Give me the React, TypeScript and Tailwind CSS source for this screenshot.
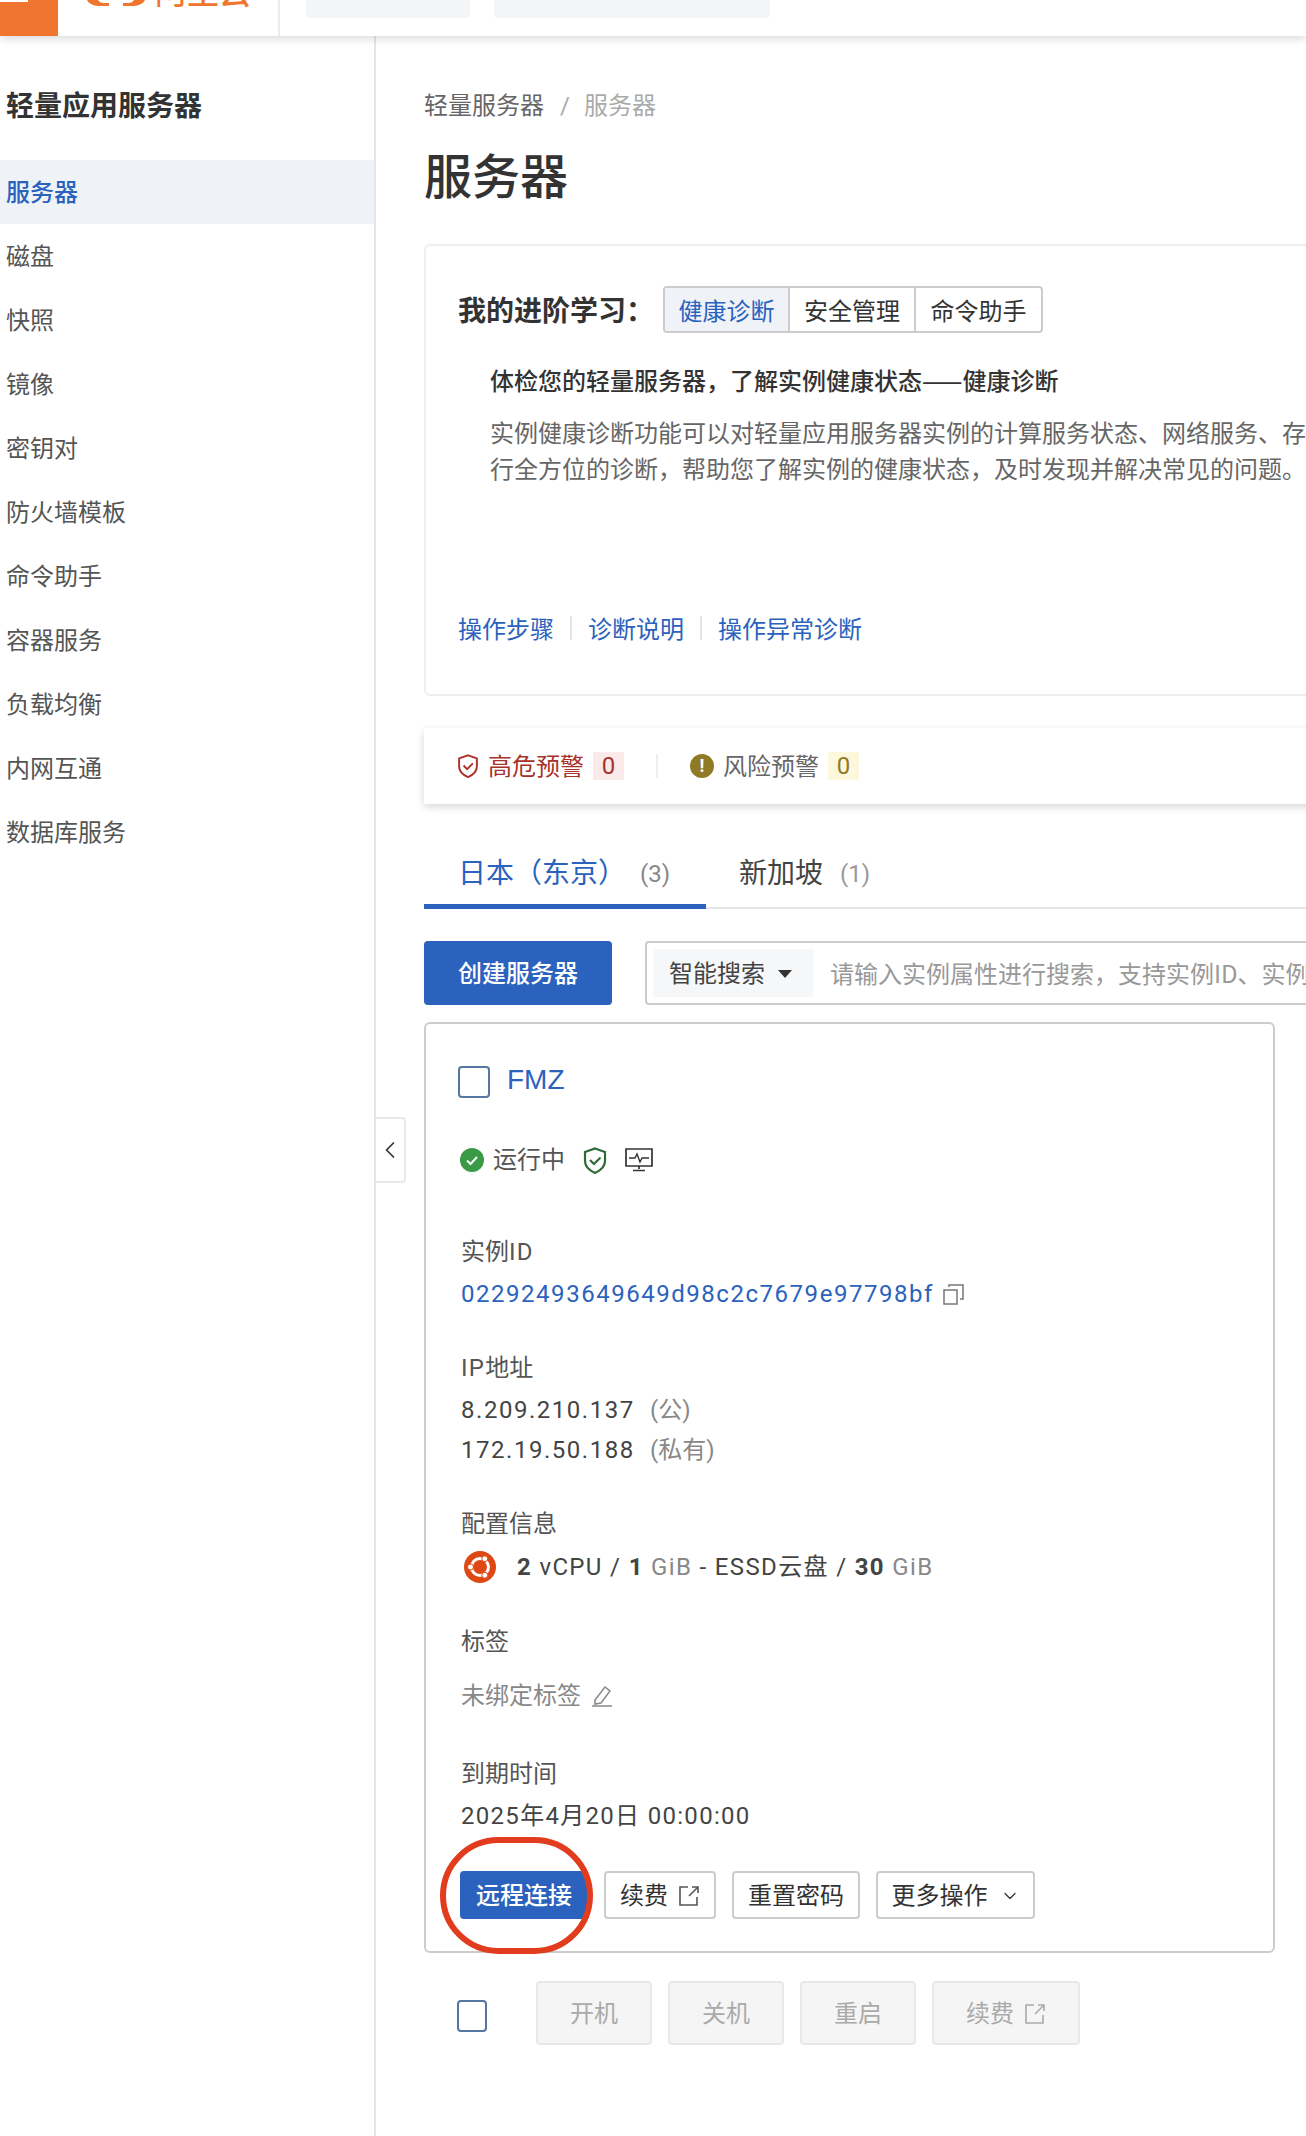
import { ChevronLeft, ChevronDown } from "lucide-react";

const navItems = ["服务器", "磁盘", "快照", "镜像", "密钥对", "防火墙模板", "命令助手", "容器服务", "负载均衡", "内网互通", "数据库服务"];

const ExternalIcon = ({ className }: { className?: string }) => (
  <svg viewBox="0 0 22 22" className={className} fill="none" stroke="currentColor" strokeWidth="1.6">
    <path d="M10 2H2v18h17v-8" />
    <path d="M14 2h6v6" />
    <path d="M20 2l-9 9" />
  </svg>
);

const ShieldIcon = ({ className }: { className?: string }) => (
  <svg viewBox="0 0 24 27" className={className} fill="none" stroke="currentColor" strokeWidth="2.2">
    <path d="M12 1.500l10 3.500v9c0 5.500-4.500 9.500-10 12-5.500-2.500-10-6.500-10-12V5z" />
    <path d="M7 13l4 4 6.500-6.500" />
  </svg>
);

const MonitorIcon = () => (
  <svg viewBox="0 0 28 24" className="h-6 w-7 text-[#333]" fill="none" stroke="currentColor" strokeWidth="1.7">
    <path d="M1 1h26v17H1z" />
    <path d="M4 10h6l2-4 3 8 2-4h7" strokeWidth="1.400" />
    <path d="M14 18v3M8 22.500h12" />
  </svg>
);

const CopyIcon = () => (
  <svg viewBox="0 0 21 21" className="ml-[9px] h-[21px] w-[21px] text-[#777]" fill="none" stroke="currentColor" strokeWidth="1.500">
    <path d="M1 6h13v14H1z" />
    <path d="M6 3V1h14v14h-3" />
  </svg>
);

const EditIcon = () => (
  <svg viewBox="0 0 22 22" className="ml-[10px] h-[22px] w-[22px] text-[#888]" fill="none" stroke="currentColor" strokeWidth="1.500">
    <path d="M4 15L14 2l5 4L10 18l-6 1z" />
    <path d="M1 21h20" />
  </svg>
);

const UbuntuIcon = () => (
  <svg viewBox="0 0 32 32" className="h-8 w-8">
    <circle cx="16" cy="16" r="16" fill="#dd4814" />
    <circle cx="16" cy="16" r="8.500" fill="none" stroke="#fff" strokeWidth="3" />
    <circle cx="6.500" cy="16" r="3" fill="#fff" stroke="#dd4814" />
    <circle cx="20.800" cy="7.800" r="3" fill="#fff" stroke="#dd4814" />
    <circle cx="20.800" cy="24.200" r="3" fill="#fff" stroke="#dd4814" />
  </svg>
);

const Label = ({ className, children }: { className: string; children: React.ReactNode }) => (
  <div className={`ml-[3px] text-[24px] leading-[32px] text-[#555] ${className}`}>{children}</div>
);

const App = () => {
  return (
    <div className="relative h-[2136px] w-[1306px] overflow-hidden bg-white font-['Roboto','Noto_Sans_CJK_SC',sans-serif] text-[24px] text-[#333]">
      {/* Top bar */}
      <header className="relative z-10 flex h-9 items-stretch overflow-hidden bg-white shadow-[0_3px_8px_rgba(0,0,0,0.14)]">
        <div className="h-9 w-[58px] bg-[#f0752e]">
          <div className="h-[2px] w-7 bg-white" />
        </div>
        <div className="flex w-[222px] items-start border-r-2 border-[#ececec] pl-[29px]">
          <svg viewBox="0 0 58 6" className="h-[6px] w-[58px] text-[#f0752e]" fill="currentColor">
            <path d="M0 0h11c1 2 3 3 6 3h5v3h-8C7 6 2 4 0 0z" />
            <path d="M58 0H47c-1 2-3 3-6 3h-5v3h8c7 0 12-2 14-6z" />
          </svg>
          <span className="-mt-[26px] ml-[10px] font-['Noto_Sans_CJK_SC',sans-serif] text-[32px] leading-[32px] font-medium text-[#f0752e]">阿里云</span>
        </div>
        <div className="ml-[26px] flex items-start gap-6">
          <div className="h-[18px] w-[164px] rounded-b bg-[#f3f5f7]" />
          <div className="h-[18px] w-[276px] rounded-b bg-[#f3f5f7]" />
        </div>
      </header>

      <div className="flex h-[2100px]">
        {/* Sidebar */}
        <aside className="relative w-[376px] shrink-0 border-r-2 border-[#e6e6e6]">
          <h2 className="mt-[54px] pl-[6px] text-[28px] leading-[34px] font-bold text-[#333]">轻量应用服务器</h2>
          <nav className="mt-[36px]">
            {navItems.map((item, i) => (
              <div
                key={item}
                className={`flex h-16 items-center pt-[2px] pl-[6px] text-[24px] ${i === 0 ? "bg-[#eff3f8] font-medium text-[#2a62bd]" : "text-[#555]"}`}
              >
                {item}
              </div>
            ))}
          </nav>
          <button className="absolute top-[1081px] -right-[32px] flex h-[66px] w-[30px] items-center justify-center rounded-r border-2 border-l-0 border-[#e8e8e8] bg-white text-[#333]">
            <ChevronLeft className="h-8 w-8" strokeWidth={1.500} />
          </button>
        </aside>

        {/* Main */}
        <main className="min-w-0 flex-1 overflow-hidden pl-[48px]">
          <div className="mt-[54px] flex text-[24px] leading-[32px]">
            <span className="text-[#666]">轻量服务器</span>
            <span className="mr-[14px] ml-[16px] text-[#aaa]">/</span>
            <span className="text-[#aaa]">服务器</span>
          </div>
          <h1 className="mt-[28px] text-[48px] leading-[56px] font-medium text-[#333]">服务器</h1>

          {/* Learning card */}
          <section className="mt-[38px] h-[452px] w-[1100px] rounded-md border-2 border-[#eeeeee] pt-[40px] pl-[32px] font-['Noto_Sans_CJK_SC',sans-serif]">
            <div className="flex items-center">
              <span className="w-[205px] text-[28px] leading-[47px] font-bold text-[#333]">{"我的进阶学习\uFF1A"}</span>
              <div className="flex h-[47px] overflow-hidden rounded border-2 border-[#cccccc] text-[24px]">
                <span className="flex w-[125px] items-center justify-center border-r-2 border-[#cccccc] bg-[#eff3f8] text-[#2a62bd]">健康诊断</span>
                <span className="flex w-[126px] items-center justify-center border-r-2 border-[#cccccc] text-[#333]">安全管理</span>
                <span className="flex w-[125px] items-center justify-center text-[#333]">命令助手</span>
              </div>
            </div>
            <h3 className="mt-[31px] pl-[32px] text-[24px] leading-[32px] font-medium whitespace-nowrap text-[#333]">{"体检您的轻量服务器\uFF0C了解实例健康状态\u2014\u2014健康诊断"}</h3>
            <p className="mt-[18px] pl-[32px] text-[24px] leading-[36px] whitespace-nowrap text-[#666]">
              实例健康诊断功能可以对轻量应用服务器实例的计算服务状态、网络服务、存储等进
              <br />
              {"行全方位的诊断\uFF0C帮助您了解实例的健康状态\uFF0C及时发现并解决常见的问题。"}
            </p>
            <div className="mt-[126px] flex items-center text-[24px] leading-[32px] text-[#2a62bd]">
              <span>操作步骤</span>
              <span className="mx-[16px] h-6 w-[2px] bg-[#e6e6e6]" />
              <span>诊断说明</span>
              <span className="mx-[16px] h-6 w-[2px] bg-[#e6e6e6]" />
              <span>操作异常诊断</span>
            </div>
          </section>

          {/* Alerts */}
          <section className="mt-[32px] flex h-[76px] w-[1100px] items-center pl-[33px] shadow-[0_3px_8px_rgba(0,0,0,0.16)]">
            <ShieldIcon className="h-6 w-[22px] text-[#b0302a]" />
            <span className="ml-[9px] pt-[2px] text-[#a8322a]">高危预警</span>
            <span className="ml-[9px] flex h-7 w-[31px] items-center justify-center bg-[#fbeaea] text-[#a8322a]">0</span>
            <span className="ml-[32px] h-6 w-[2px] bg-[#eeeeee]" />
            <span className="ml-[32px] flex h-6 w-6 items-center justify-center rounded-full bg-[#8f7a26] text-[18px] leading-none font-bold text-white">!</span>
            <span className="ml-[9px] pt-[2px] text-[#666]">风险预警</span>
            <span className="ml-[9px] flex h-7 w-[31px] items-center justify-center bg-[#fdf8dc] text-[#8f7a26]">0</span>
          </section>

          {/* Tabs */}
          <div className="mt-[49px] flex w-[1100px] border-b-2 border-[#e6e6e6]">
            <div className="-mb-[2px] flex h-[56px] w-[282px] items-start border-b-[5px] border-[#2a62bd] pt-[1px] pl-[34px]">
              <span className="text-[28px] leading-[40px] text-[#2a62bd]">{"日本\uFF08东京\uFF09"}</span>
              <span className="ml-[14px] text-[24px] leading-[40px] text-[#888]">(3)</span>
            </div>
            <div className="flex items-start pt-[1px] pl-[33px]">
              <span className="text-[28px] leading-[40px] text-[#444]">新加坡</span>
              <span className="ml-[17px] text-[24px] leading-[40px] text-[#999]">(1)</span>
            </div>
          </div>

          {/* Toolbar */}
          <div className="mt-[32px] flex w-[1100px] items-stretch">
            <button className="h-16 w-[188px] rounded bg-[#2a62bd] pt-[2px] text-[24px] font-medium text-white">创建服务器</button>
            <div className="ml-[33px] flex h-16 flex-1 items-center rounded border-2 border-[#cccccc] pl-[6px]">
              <div className="flex h-12 w-[160px] items-center bg-[#f5f7f9] pt-[2px] pl-[16px]">
                <span className="text-[#444]">智能搜索</span>
                <span className="ml-[13px] h-0 w-0 border-x-[7px] border-t-[8px] border-x-transparent border-t-[#333]" />
              </div>
              <span className="ml-[17px] font-['Noto_Sans_CJK_SC',sans-serif] whitespace-nowrap text-[#999]">{"请输入实例属性进行搜索\uFF0C支持实例ID、实例名称、IP地址"}</span>
            </div>
          </div>

          {/* Instance card */}
          <section className="mt-[17px] w-[851px] rounded-md border-2 border-[#cccccc] pt-[42px] pb-[32px] pl-[32px]">
            <div className="flex items-start">
              <span className="h-8 w-8 rounded border-2 border-[#5577a0]" />
              <span className="-mt-[2px] ml-[17px] font-['Liberation_Sans',sans-serif] text-[28px] leading-8 text-[#2a62bd]">FMZ</span>
            </div>
            <div className="mt-[46px] ml-[2px] flex items-center leading-8">
              <svg viewBox="0 0 24 24" className="h-6 w-6">
                <circle cx="12" cy="12" r="12" fill="#3a9a45" />
                <path d="M7 12.500l3.500 3.500L17 9" fill="none" stroke="#fff" strokeWidth="2" />
              </svg>
              <span className="ml-[9px] text-[#555]">运行中</span>
              <ShieldIcon className="ml-[18px] h-[27px] w-6 text-[#2e6b34]" />
              <span className="ml-[18px]">
                <MonitorIcon />
              </span>
            </div>

            <Label className="mt-[60px]">
              实例<span className="tracking-[1.3px]">ID</span>
            </Label>
            <div className="mt-[10px] ml-[3px] flex items-center text-[24px] leading-8 tracking-[1.53px] text-[#2a62bd]">
              02292493649649d98c2c7679e97798bf
              <CopyIcon />
            </div>

            <Label className="mt-[42px]">
              <span className="tracking-[1.3px]">IP</span>地址
            </Label>
            <div className="mt-[10px] ml-[3px] flex leading-8 tracking-[1.53px] text-[#444]">
              <span className="w-[189px]">8.209.210.137</span>
              <span className="tracking-normal text-[#888]">(公)</span>
            </div>
            <div className="mt-[8px] ml-[3px] flex leading-8 tracking-[1.53px] text-[#444]">
              <span className="w-[189px]">172.19.50.188</span>
              <span className="tracking-normal text-[#888]">(私有)</span>
            </div>

            <Label className="mt-[42px]">配置信息</Label>
            <div className="mt-[11px] ml-[6px] flex items-center leading-8 text-[#444]">
              <UbuntuIcon />
              <span className="ml-[21px] tracking-[1.35px] whitespace-pre">
                <b className="font-bold">2</b> vCPU / <b className="font-bold">1</b> <span className="text-[#888]">GiB</span> - ESSD云盘 / <b className="font-bold">30</b> <span className="text-[#888]">GiB</span>
              </span>
            </div>

            <Label className="mt-[43px]">标签</Label>
            <div className="mt-[22px] ml-[3px] flex items-center leading-8 text-[#888]">
              未绑定标签
              <EditIcon />
            </div>

            <Label className="mt-[46px]">到期时间</Label>
            <div className="mt-[10px] ml-[3px] leading-8 tracking-[1.3px] text-[#444]">2025年4月20日 00:00:00</div>

            <div className="mt-[39px] ml-[2px] flex gap-4">
              <div className="relative">
                <button className="h-12 w-[128px] rounded bg-[#2a62bd] pt-[2px] font-medium text-white">远程连接</button>
                <div className="absolute -top-[34px] -left-[20px] h-[117px] w-[153px] rounded-full border-[6px] border-[#e23c1e]" />
              </div>
              <button className="flex h-12 w-[112px] items-center justify-center gap-[10px] rounded border-2 border-[#cccccc] pt-[2px] text-[#333]">
                续费
                <ExternalIcon className="h-[22px] w-[22px] text-[#555]" />
              </button>
              <button className="h-12 w-[128px] rounded border-2 border-[#cccccc] pt-[2px] text-[#333]">重置密码</button>
              <button className="flex h-12 w-[159px] items-center justify-center gap-3 rounded border-2 border-[#cccccc] pt-[2px] text-[#333]">
                更多操作
                <ChevronDown className="h-5 w-5" strokeWidth={1.500} />
              </button>
            </div>
          </section>

          {/* Batch actions */}
          <div className="mt-[28px] flex items-center">
            <span className="mt-[6px] ml-[33px] h-8 w-[30px] rounded border-2 border-[#5577a0]" />
            <div className="ml-[49px] flex gap-4 text-[#aaa]">
              <button className="h-16 w-[116px] rounded border-2 border-[#e8e8e8] bg-[#f5f5f5] pt-[2px]">开机</button>
              <button className="h-16 w-[116px] rounded border-2 border-[#e8e8e8] bg-[#f5f5f5] pt-[2px]">关机</button>
              <button className="h-16 w-[116px] rounded border-2 border-[#e8e8e8] bg-[#f5f5f5] pt-[2px]">重启</button>
              <button className="flex h-16 w-[148px] items-center justify-center gap-[10px] rounded border-2 border-[#e8e8e8] bg-[#f5f5f5] pt-[2px]">
                续费
                <ExternalIcon className="h-[22px] w-[22px]" />
              </button>
            </div>
          </div>
        </main>
      </div>
    </div>
  );
};

export default App;
